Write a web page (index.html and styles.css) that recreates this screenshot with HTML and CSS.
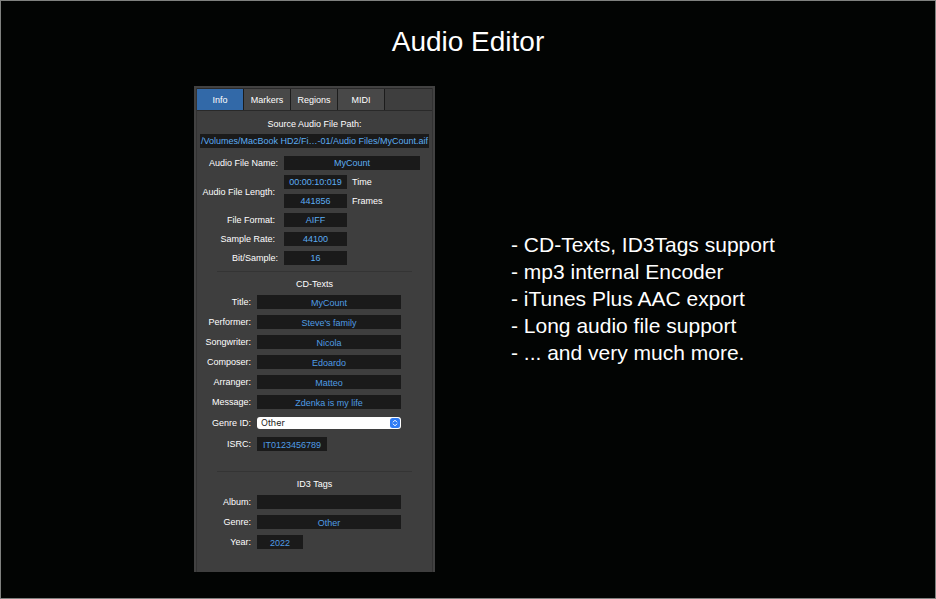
FILE: index.html
```html
<!DOCTYPE html>
<html lang="en">
<head>
<meta charset="utf-8">
<title>Audio Editor</title>
<link rel="stylesheet" href="styles.css">
</head>
<body>
<h1 class="title">Audio Editor</h1>
<main class="stage">
  <form class="panel">
    <div class="panel-frame">
      <div class="tabs" role="tablist">
        <button type="button" class="tab tab-active" role="tab" aria-selected="true">Info</button>
        <button type="button" class="tab" role="tab">Markers</button>
        <button type="button" class="tab" role="tab">Regions</button>
        <button type="button" class="tab" role="tab">MIDI</button>
      </div>

      <div class="source">
        <label class="heading" for="path">Source Audio File Path:</label>
        <input class="field path" id="path" value="/Volumes/MacBook HD2/Fi…-01/Audio Files/MyCount.aif">
      </div>

      <section class="group file">
        <div class="row near"><label for="name">Audio File Name:</label><input class="field" id="name" value="MyCount"></div>
        <div class="row">
          <label for="time">Audio File Length:</label>
          <div class="stack">
            <div class="pair"><input class="field small" id="time" value="00:00:10:019"><label for="time">Time</label></div>
            <div class="pair"><input class="field small" id="frames" value="441856"><label for="frames">Frames</label></div>
          </div>
        </div>
        <div class="row"><label for="format">File Format:</label><input class="field small" id="format" value="AIFF"></div>
        <div class="row"><label for="rate">Sample Rate:</label><input class="field small" id="rate" value="44100"></div>
        <div class="row near"><label for="bits">Bit/Sample:</label><input class="field small" id="bits" value="16"></div>
      </section>

      <section class="group tags cd">
        <h2 class="heading">CD-Texts</h2>
        <div class="row"><label for="cd-title">Title:</label><input class="field" id="cd-title" value="MyCount"></div>
        <div class="row"><label for="performer">Performer:</label><input class="field" id="performer" value="Steve's family"></div>
        <div class="row"><label for="songwriter">Songwriter:</label><input class="field" id="songwriter" value="Nicola"></div>
        <div class="row"><label for="composer">Composer:</label><input class="field" id="composer" value="Edoardo"></div>
        <div class="row"><label for="arranger">Arranger:</label><input class="field" id="arranger" value="Matteo"></div>
        <div class="row"><label for="message">Message:</label><input class="field" id="message" value="Zdenka is my life"></div>
        <div class="row">
          <label for="genre-id">Genre ID:</label>
          <div class="picker">
            <select id="genre-id"><option>Other</option></select>
            <svg class="picker-icon" viewBox="0 0 10 10" aria-hidden="true">
              <rect width="10" height="10" rx="2.5" fill="#2f7cf6"/>
              <path d="M3.2 4 5 2.2 6.8 4M3.2 6 5 7.8 6.8 6" fill="none" stroke="#fff" stroke-width="1" stroke-linecap="round" stroke-linejoin="round"/>
            </svg>
          </div>
        </div>
        <div class="row"><label for="isrc">ISRC:</label><input class="field code" id="isrc" value="IT0123456789"></div>
      </section>

      <section class="group tags id3">
        <h2 class="heading">ID3 Tags</h2>
        <div class="row"><label for="album">Album:</label><input class="field" id="album" value=""></div>
        <div class="row"><label for="genre">Genre:</label><input class="field" id="genre" value="Other"></div>
        <div class="row"><label for="year">Year:</label><input class="field year" id="year" value="2022"></div>
      </section>
    </div>
  </form>

  <ul class="features">
    <li>- CD-Texts, ID3Tags support</li>
    <li>- mp3 internal Encoder</li>
    <li>- iTunes Plus AAC export</li>
    <li>- Long audio file support</li>
    <li>- ... and very much more.</li>
  </ul>
</main>
</body>
</html>
```
FILE: styles.css
```css
* {
  box-sizing: border-box;
}

body {
  margin: 0;
  min-height: 100vh;
  border: 1px solid #7f817f;
  background: #020403;
  color: #fff;
  font-family: "Liberation Sans", Arial, sans-serif;
}

.title {
  margin: 0;
  padding: 25px 0 28px;
  font-size: 28px;
  line-height: 32px;
  font-weight: 400;
  text-align: center;
}

.stage {
  display: grid;
  grid-template-columns: 193fr minmax(241px, 241fr) 76fr 424fr;
  align-items: start;
}

/* Inspector panel */
.panel {
  grid-column: 2;
  margin: 0;
  padding: 2px 2px 0;
  background: #424242;
  color: #fff;
  font-size: 9px;
  line-height: 12px;
}

.panel-frame {
  padding-bottom: 23px;
  border: 1px solid #323232;
  border-width: 0 1px;
  background: #3e3e3e;
}

.tabs {
  display: flex;
  height: 23px;
  border: 1px solid #292929;
  border-width: 1px 0;
}

.tab {
  width: 47px;
  padding: 0;
  border: 0;
  border-right: 1px solid #1c1c1c;
  background: #484848;
  color: #fff;
  font: inherit;
}

.tab-active {
  background: #3269a8;
}

.heading {
  margin: 0;
  font-size: 9px;
  line-height: 12px;
  font-weight: 400;
  text-align: center;
}

.source {
  display: flex;
  flex-direction: column;
  gap: 4px;
  padding: 7px 3px 8px;
}

.field {
  flex: 1;
  min-width: 0;
  height: 14px;
  padding: 0;
  border: 0;
  border-radius: 0;
  background: #1a1a1a;
  color: #5cadf2;
  font: inherit;
  text-align: center;
}

.path {
  flex: none;
}

.group {
  display: flex;
  flex-direction: column;
}

.row,
.pair {
  display: flex;
  align-items: center;
  gap: 9px;
}

.row > label {
  text-align: right;
  white-space: nowrap;
}

.file {
  gap: 5px;
  padding-right: 12px;
}

.file .row > label {
  width: 78px;
}

.file .near {
  gap: 6px;
}

.file .near > label {
  width: 81px;
}

.pair {
  gap: 5px;
}

.stack {
  display: flex;
  flex-direction: column;
  gap: 5px;
}

.small {
  flex: none;
  width: 63px;
}

.tags {
  gap: 6px;
  margin: 6px 20px 0;
  border-top: 1px solid #343434;
}

.tags .heading {
  padding-top: 6px;
  margin-bottom: -1px;
}

.tags .row {
  gap: 6px;
  margin: 0 11px 0 -20px;
}

.tags .row > label {
  width: 54px;
}

.tags .field {
  padding-top: 1px;
  color: #4f9ce4;
}

.id3 {
  margin-top: 20px;
}

.code {
  flex: none;
  width: 70px;
}

.year {
  flex: none;
  width: 46px;
}

.picker {
  position: relative;
  display: flex;
  flex: 1;
  padding: 2px 0;
}

.picker select {
  width: 100%;
  height: 12px;
  padding: 0 4px;
  border: 0;
  border-radius: 3px;
  appearance: none;
  background: #fff;
  color: #222;
  font: 9px/12px Inter, sans-serif;
}

.picker-icon {
  position: absolute;
  top: 3px;
  right: 1px;
  width: 10px;
  height: 10px;
  pointer-events: none;
}

/* Feature list */
.features {
  grid-column: 4;
  margin: 0;
  padding: 145px 0 0;
  list-style: none;
  font-size: 21px;
  line-height: 27px;
}
```
